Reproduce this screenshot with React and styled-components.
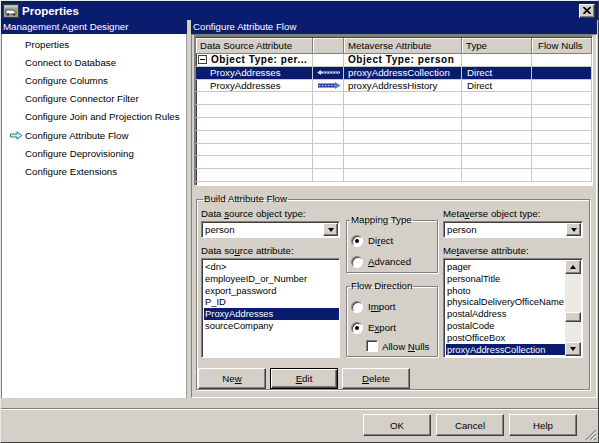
import React from "react";
import styled, { createGlobalStyle, css } from "styled-components";

const NAVY = "#0a1c6e";
const FACE = "#d4d0c8";
const TEXT = "9.7px";

const GlobalStyle = createGlobalStyle`
  html, body {
    margin: 0;
    padding: 0;
    background: ${FACE};
  }
  body {
    font-family: "Liberation Sans", Arial, sans-serif;
    font-size: ${TEXT};
    color: #000;
  }
  * {
    box-sizing: border-box;
  }
`;

const raised = css`
  border: 1px solid;
  border-color: #fff #404040 #404040 #fff;
  box-shadow: inset -1px -1px 0 #808080;
`;

const sunken = css`
  border: 1px solid;
  border-color: #808080 #fff #fff #808080;
  box-shadow: inset 1px 1px 0 #404040;
`;

const Window = styled.div`
  width: 599px;
  height: 443px;
  background: ${FACE};
  display: flex;
  flex-direction: column;
  border: 1px solid;
  border-color: #e8e8e8 #404040 #404040 #e8e8e8;
`;

const TitleBar = styled.div`
  height: 19px;
  background: ${NAVY};
  display: flex;
  align-items: center;
  padding: 0 3px 0 2px;
`;

const Title = styled.div`
  color: #fff;
  font-weight: bold;
  font-size: 11.5px;
  margin-left: 3px;
`;

const CloseButton = styled.div`
  ${raised};
  margin-left: auto;
  width: 16px;
  height: 14px;
  background: ${FACE};
  display: flex;
  align-items: center;
  justify-content: center;
`;

const Body = styled.div`
  display: flex;
  height: 378px;
`;

const LeftPane = styled.div`
  width: 186px;
  display: flex;
  flex-direction: column;
`;

const PaneHeader = styled.div`
  height: 14px;
  line-height: 14px;
  background: ${NAVY};
  color: #fff;
  font-size: ${TEXT};
  padding-left: 2px;
  white-space: nowrap;
  overflow: hidden;
`;

const NavList = styled.div`
  flex: 1;
  background: #fff;
  border-left: 1px solid #808080;
  border-right: 1px solid #a0a0a0;
  padding-top: 1px;
`;

const NavItem = styled.div`
  height: 18.2px;
  display: flex;
  align-items: center;
  font-size: ${TEXT};
  white-space: nowrap;
`;

const NavIcon = styled.span`
  flex-shrink: 0;
  width: 23px;
  padding-left: 8px;
  display: flex;
  align-items: center;
`;

const Splitter = styled.div`
  width: 4px;
`;

const RightPane = styled.div`
  flex: 1;
  display: flex;
  flex-direction: column;
  margin-right: 1px;
`;

const ContentPanel = styled.div`
  flex: 1;
  border: 1px solid;
  border-color: #808080 #fff #fff #808080;
  padding: 0 3px 4px 2px;
  display: flex;
  flex-direction: column;
`;

const GridBox = styled.div`
  ${sunken};
  border-width: 2px 1px 1px 2px;
  height: 151px;
  background: #fff;
  padding: 1px 0 0 0;
  overflow: hidden;
`;

const GridRow = styled.div`
  display: grid;
  grid-template-columns: 117px 31px 118px 70px 1fr;
  height: ${(p) => (p.$header ? 16 : 12.8)}px;
  background: ${(p) => (p.$selected ? NAVY : "transparent")};
  color: ${(p) => (p.$selected ? "#fff" : "#000")};
`;

const HeadCell = styled.div`
  background: ${FACE};
  border-right: 1px solid #808080;
  border-bottom: 1px solid #808080;
  box-shadow: inset 1px 1px 0 #fff;
  padding-left: ${(p) => p.$pad ?? 4}px;
  line-height: 15px;
  font-size: ${TEXT};
  white-space: nowrap;
  overflow: hidden;
`;

const Cell = styled.div`
  border-right: 1px solid #c8c8c8;
  border-bottom: 1px solid #c8c8c8;
  padding-left: ${(p) => p.$pad ?? 4}px;
  line-height: 12px;
  font-size: ${(p) => (p.$bold ? "10px" : TEXT)};
  white-space: nowrap;
  overflow: hidden;
  display: flex;
  align-items: center;
  font-weight: ${(p) => (p.$bold ? "bold" : "normal")};
  letter-spacing: ${(p) => (p.$bold ? "0.55px" : "0")};
`;

const MinusBox = styled.span`
  width: 9px;
  height: 9px;
  border: 1px solid #404040;
  display: inline-flex;
  align-items: center;
  justify-content: center;
  margin-right: 4px;
  flex-shrink: 0;
  &::after {
    content: "";
    width: 5px;
    height: 1px;
    background: #000;
  }
`;

const Group = styled.fieldset`
  margin: ${(p) => p.$margin || 0};
  padding: ${(p) => p.$padding || 0};
  border: 1px solid #808080;
  box-shadow: 1px 1px 0 #fff, inset 1px 1px 0 #fff;
  min-inline-size: 0;
  min-width: 0;
`;

const Legend = styled.legend`
  font-size: ${TEXT};
  line-height: 12px;
  padding: 0 1px;
  margin-left: ${(p) => p.$offset ?? 4}px;
`;

const Columns = styled.div`
  display: flex;
  padding-left: 3px;
  margin-top: 3px;
`;

const Column = styled.div`
  width: ${(p) => p.$width}px;
  margin-right: ${(p) => p.$gap ?? 0}px;
  display: flex;
  flex-direction: column;
`;

const FieldLabel = styled.div`
  font-size: ${TEXT};
  line-height: 12px;
  height: 12px;
  margin-top: ${(p) => p.$top ?? 0}px;
  margin-bottom: 1px;
  white-space: nowrap;
`;

const Key = styled.span`
  text-decoration: underline;
`;

const Combo = styled.div`
  ${sunken};
  height: 17px;
  background: #fff;
  display: flex;
  align-items: center;
  padding: 1px 1px 1px 3px;
  font-size: ${TEXT};
`;

const ComboValue = styled.span`
  flex: 1;
`;

const ArrowButton = styled.span`
  ${raised};
  width: 15px;
  height: 13px;
  background: ${FACE};
  display: flex;
  align-items: center;
  justify-content: center;
`;

const Triangle = styled.span`
  width: 0;
  height: 0;
  border-left: 3.5px solid transparent;
  border-right: 3.5px solid transparent;
  ${(p) =>
    p.$up
      ? "border-bottom: 4px solid #000;"
      : "border-top: 4px solid #000;"}
`;

const ListBox = styled.div`
  ${sunken};
  height: 100px;
  background: #fff;
  display: flex;
  overflow: hidden;
`;

const ListItems = styled.div`
  flex: 1;
  min-width: 0;
  padding: 2px 0 0 2px;
  overflow: hidden;
`;

const ListItem = styled.div`
  height: 11.8px;
  line-height: 11.8px;
  font-size: 9.4px;
  padding-left: 1px;
  white-space: nowrap;
  background: ${(p) => (p.$selected ? NAVY : "transparent")};
  color: ${(p) => (p.$selected ? "#fff" : "#000")};
`;

const ScrollBar = styled.div`
  flex-shrink: 0;
  width: 16px;
  display: flex;
  flex-direction: column;
  background: #ece9e3;
  margin: 1px 1px 1px 0;
`;

const ScrollButton = styled.div`
  ${raised};
  height: 14px;
  background: ${FACE};
  display: flex;
  align-items: center;
  justify-content: center;
`;

const ScrollTrack = styled.div`
  flex: 1;
  display: flex;
  flex-direction: column;
  justify-content: flex-end;
  padding-bottom: 20px;
`;

const Thumb = styled.div`
  ${raised};
  height: 10px;
  background: ${FACE};
`;

const RadioRow = styled.label`
  height: ${(p) => p.$height ?? 21}px;
  display: flex;
  align-items: center;
  padding-left: ${(p) => p.$indent ?? 4}px;
  font-size: ${TEXT};
  gap: ${(p) => p.$gap ?? 5}px;
  white-space: nowrap;
`;

const Radio = styled.span`
  flex-shrink: 0;
  width: 12px;
  height: 12px;
  border-radius: 50%;
  background: #fff;
  border: 1px solid;
  border-color: #808080 #fff #fff #808080;
  box-shadow: inset 1px 1px 0 #404040;
  display: flex;
  align-items: center;
  justify-content: center;
  &::after {
    content: "";
    width: 4px;
    height: 4px;
    border-radius: 50%;
    background: ${(p) => (p.$checked ? "#000" : "transparent")};
  }
`;

const CheckBox = styled.span`
  flex-shrink: 0;
  width: 12px;
  height: 12px;
  background: #fff;
  ${sunken};
`;

const ButtonRow = styled.div`
  display: flex;
  gap: ${(p) => p.$gap ?? 4}px;
  margin-top: ${(p) => p.$top ?? 0}px;
  justify-content: ${(p) => (p.$end ? "flex-end" : "flex-start")};
  padding-right: ${(p) => p.$right ?? 0}px;
`;

const Button = styled.div`
  width: 68px;
  height: ${(p) => p.$height ?? 21}px;
  background: ${FACE};
  display: flex;
  align-items: center;
  justify-content: center;
  font-size: ${TEXT};
  ${(p) =>
    p.$default
      ? css`
          border: 1px solid #000;
          box-shadow: inset 1px 1px 0 #fff, inset -1px -1px 0 #404040,
            inset -2px -2px 0 #808080;
        `
      : raised}
`;

const Footer = styled.div`
  flex: 1;
  position: relative;
  padding-top: 10px;
`;

const Separator = styled.div`
  height: 2px;
  border-top: 1px solid #808080;
  border-bottom: 1px solid #fff;
`;

const Grip = styled.svg`
  position: absolute;
  right: 1px;
  bottom: 1px;
`;

const navItems = [
  "Properties",
  "Connect to Database",
  "Configure Columns",
  "Configure Connector Filter",
  "Configure Join and Projection Rules",
  "Configure Attribute Flow",
  "Configure Deprovisioning",
  "Configure Extensions",
];

const sourceAttrs = [
  "<dn>",
  "employeeID_or_Number",
  "export_password",
  "P_ID",
  "ProxyAddresses",
  "sourceCompany",
];

const metaAttrs = [
  "pager",
  "personalTitle",
  "photo",
  "physicalDeliveryOfficeName",
  "postalAddress",
  "postalCode",
  "postOfficeBox",
  "proxyAddressCollection",
  "proxyAddressHistory",
];

const AppIcon = () => (
  <svg width="16" height="14" viewBox="0 0 16 14">
    <rect x="0.5" y="0.5" width="15" height="13" fill="#9aa58c" stroke="#3a3a3a" />
    <rect x="1.5" y="1.5" width="13" height="2" fill="#c8cfbf" />
    <path d="M3 6 H10 L12 8 H13 V10 H3 Z" fill="#fff" stroke="#333" strokeWidth="0.8" />
    <circle cx="5" cy="10.5" r="1.2" fill="#333" />
    <circle cx="11" cy="10.5" r="1.2" fill="#333" />
  </svg>
);

const NavArrow = () => (
  <svg width="13" height="9" viewBox="0 0 13 9">
    <path
      d="M0.5 3 H7 V0.8 L12 4.5 L7 8.2 V6 H0.5 Z"
      fill="#c8f0f0"
      stroke="#1f7f86"
      strokeWidth="1"
    />
  </svg>
);

const ImportArrow = () => (
  <svg width="24" height="5" viewBox="0 0 24 5">
    <path d="M0 2.5 L4 0 V5 Z" fill="#cfd8ff" />
    <rect x="3" y="1.5" width="20" height="2" fill="#cfd8ff" />
    <path d="M6 2.5 H22" stroke={NAVY} strokeWidth="0.6" strokeDasharray="1.5 1.5" />
  </svg>
);

const ExportArrow = () => (
  <svg width="24" height="7" viewBox="0 0 24 7">
    <rect x="1" y="1.5" width="18" height="4" fill="#2a3f9c" />
    <path d="M2 3.5 H18" stroke="#fff" strokeWidth="0.8" strokeDasharray="1.5 1.5" />
    <path d="M18 0 L23.5 3.5 L18 7 Z" fill="#4b7ed6" />
  </svg>
);

const App = () => {
  return (
    <>
      <GlobalStyle />
      <Window>
        <TitleBar>
          <AppIcon />
          <Title>Properties</Title>
          <CloseButton>
            <svg width="8" height="7" viewBox="0 0 8 7">
              <path d="M0.5 0 L7.5 7 M7.5 0 L0.5 7" stroke="#000" strokeWidth="1.6" />
            </svg>
          </CloseButton>
        </TitleBar>

        <Body>
          <LeftPane>
            <PaneHeader>Management Agent Designer</PaneHeader>
            <NavList>
              {navItems.map((item) => (
                <NavItem key={item}>
                  <NavIcon>{item === "Configure Attribute Flow" && <NavArrow />}</NavIcon>
                  {item}
                </NavItem>
              ))}
            </NavList>
          </LeftPane>

          <Splitter />

          <RightPane>
            <PaneHeader>Configure Attribute Flow</PaneHeader>
            <ContentPanel>
              <GridBox>
                <GridRow $header>
                  <HeadCell>Data Source Attribute</HeadCell>
                  <HeadCell />
                  <HeadCell>Metaverse Attribute</HeadCell>
                  <HeadCell>Type</HeadCell>
                  <HeadCell $pad={6}>Flow Nulls</HeadCell>
                </GridRow>
                <GridRow>
                  <Cell $bold $pad={2}>
                    <MinusBox />
                    Object Type: per...
                  </Cell>
                  <Cell />
                  <Cell $bold>Object Type: person</Cell>
                  <Cell />
                  <Cell />
                </GridRow>
                <GridRow $selected>
                  <Cell $pad={14}>ProxyAddresses</Cell>
                  <Cell $pad={4}>
                    <ImportArrow />
                  </Cell>
                  <Cell>proxyAddressCollection</Cell>
                  <Cell $pad={5}>Direct</Cell>
                  <Cell />
                </GridRow>
                <GridRow>
                  <Cell $pad={14}>ProxyAddresses</Cell>
                  <Cell $pad={4}>
                    <ExportArrow />
                  </Cell>
                  <Cell>proxyAddressHistory</Cell>
                  <Cell $pad={5}>Direct</Cell>
                  <Cell />
                </GridRow>
                {Array.from({ length: 7 }).map((_, i) => (
                  <GridRow key={i}>
                    <Cell />
                    <Cell />
                    <Cell />
                    <Cell />
                    <Cell />
                  </GridRow>
                ))}
              </GridBox>

              <Group $margin="7px 3px 0 2px" $padding="0 0 0 1px">
                <Legend $offset={5}>Build Attribute Flow</Legend>
                <Columns>
                  <Column $width={139} $gap={6}>
                    <FieldLabel>
                      Data <Key>s</Key>ource object type:
                    </FieldLabel>
                    <Combo>
                      <ComboValue>person</ComboValue>
                      <ArrowButton>
                        <Triangle />
                      </ArrowButton>
                    </Combo>
                    <FieldLabel $top={7}>
                      Data so<Key>u</Key>rce attribute:
                    </FieldLabel>
                    <ListBox>
                      <ListItems>
                        {sourceAttrs.map((a) => (
                          <ListItem key={a} $selected={a === "ProxyAddresses"}>
                            {a}
                          </ListItem>
                        ))}
                      </ListItems>
                    </ListBox>
                  </Column>

                  <Column $width={92} $gap={5}>
                    <Group $margin="6px 0 0 0" $padding="4px 0 0 0">
                      <Legend $offset={3}>Mapping Type</Legend>
                      <RadioRow>
                        <Radio $checked />
                        <span>
                          Di<Key>r</Key>ect
                        </span>
                      </RadioRow>
                      <RadioRow>
                        <Radio />
                        <span>
                          <Key>A</Key>dvanced
                        </span>
                      </RadioRow>
                    </Group>
                    <Group $margin="7px 0 0 0" $padding="4px 0 2px 0">
                      <Legend $offset={3}>Flow Direction</Legend>
                      <RadioRow>
                        <Radio />
                        <span>
                          I<Key>m</Key>port
                        </span>
                      </RadioRow>
                      <RadioRow>
                        <Radio $checked />
                        <span>
                          E<Key>x</Key>port
                        </span>
                      </RadioRow>
                      <RadioRow $height={16} $indent={19} $gap={4}>
                        <CheckBox />
                        <span>
                          Allow <Key>N</Key>ulls
                        </span>
                      </RadioRow>
                    </Group>
                  </Column>

                  <Column $width={140}>
                    <FieldLabel>
                      Meta<Key>v</Key>erse object type:
                    </FieldLabel>
                    <Combo>
                      <ComboValue>person</ComboValue>
                      <ArrowButton>
                        <Triangle />
                      </ArrowButton>
                    </Combo>
                    <FieldLabel $top={7}>
                      Me<Key>t</Key>averse attribute:
                    </FieldLabel>
                    <ListBox>
                      <ListItems>
                        {metaAttrs.map((a) => (
                          <ListItem key={a} $selected={a === "proxyAddressCollection"}>
                            {a}
                          </ListItem>
                        ))}
                      </ListItems>
                      <ScrollBar>
                        <ScrollButton>
                          <Triangle $up />
                        </ScrollButton>
                        <ScrollTrack>
                          <Thumb />
                        </ScrollTrack>
                        <ScrollButton>
                          <Triangle />
                        </ScrollButton>
                      </ScrollBar>
                    </ListBox>
                  </Column>
                </Columns>

                <ButtonRow $top={10}>
                  <Button>
                    Ne<Key>w</Key>
                  </Button>
                  <Button $default>
                    <Key>E</Key>dit
                  </Button>
                  <Button>
                    <Key>D</Key>elete
                  </Button>
                </ButtonRow>
              </Group>
            </ContentPanel>
          </RightPane>
        </Body>

        <Footer>
          <Separator />
          <ButtonRow $top={4} $gap={5} $end $right={21}>
            <Button $height={22}>OK</Button>
            <Button $height={22}>Cancel</Button>
            <Button $height={22}>Help</Button>
          </ButtonRow>
          <Grip width="12" height="12" viewBox="0 0 12 12">
            <path d="M11 1 L1 11 M11 5 L5 11 M11 9 L9 11" stroke="#808080" strokeWidth="1.2" />
            <path d="M11 2.5 L2.5 11 M11 6.5 L6.5 11" stroke="#fff" strokeWidth="1" />
          </Grip>
        </Footer>
      </Window>
    </>
  );
};

export default App;
